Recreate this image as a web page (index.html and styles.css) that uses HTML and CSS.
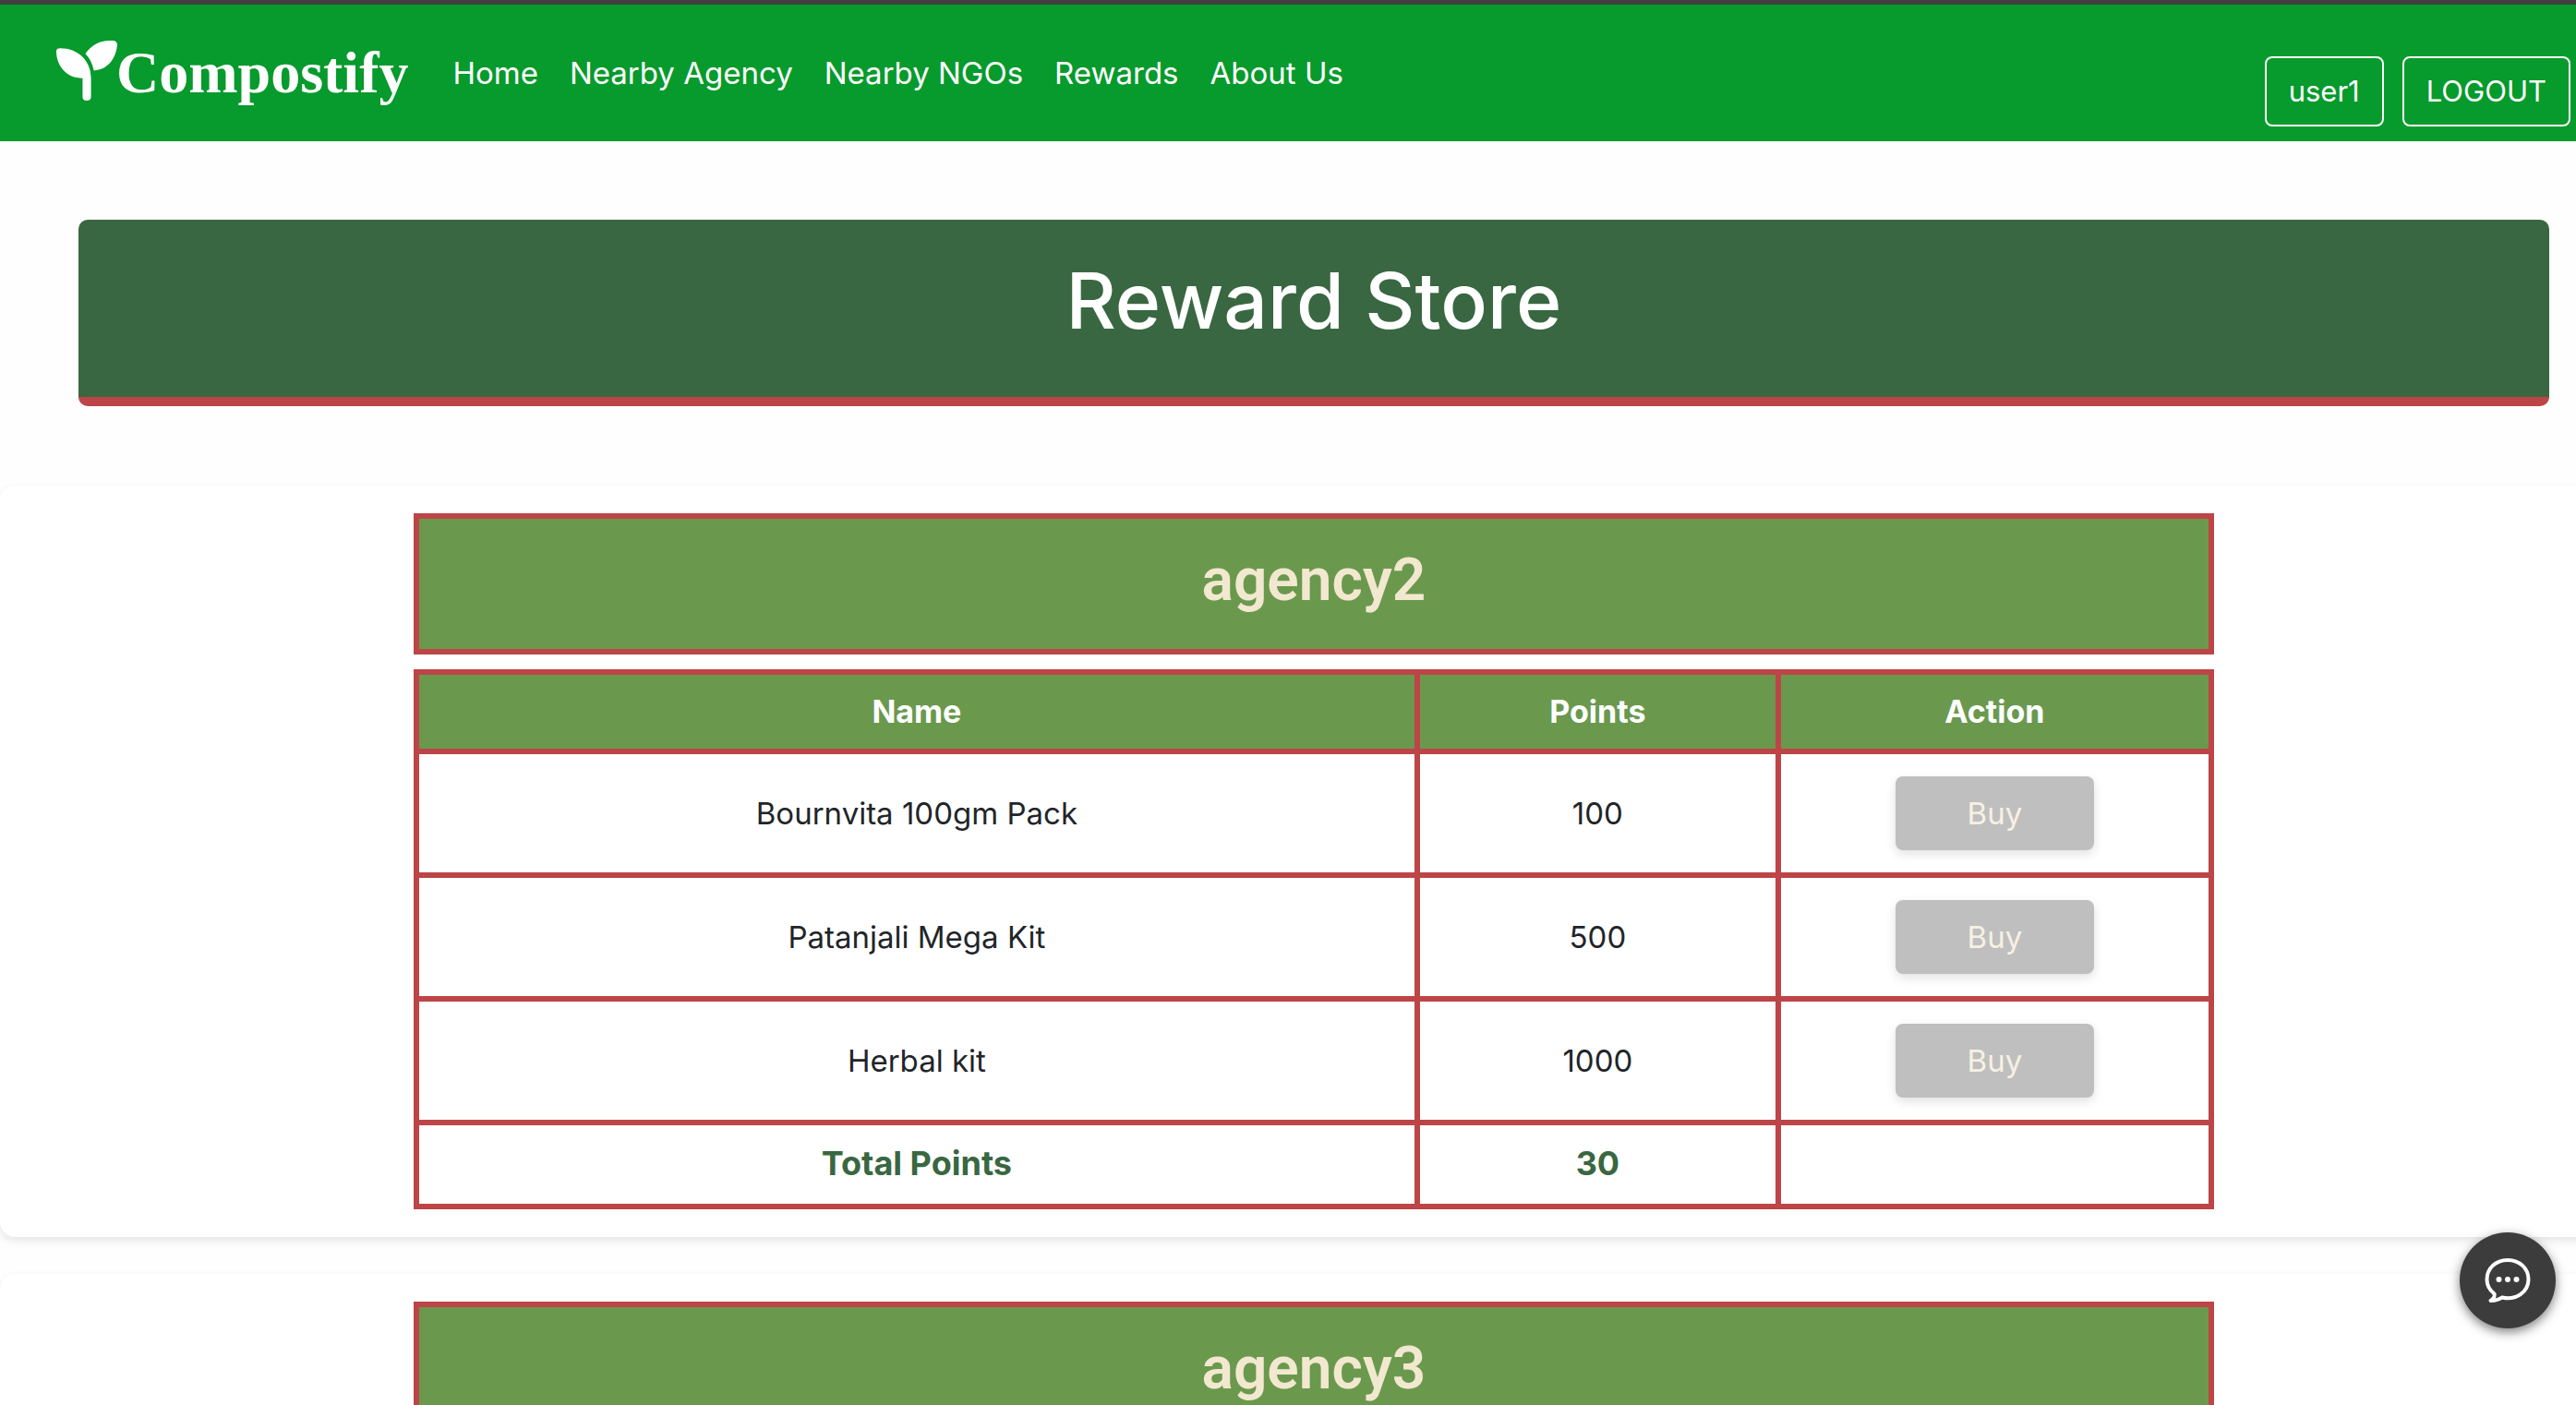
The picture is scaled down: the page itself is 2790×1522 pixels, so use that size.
FILE: index.html
```html
<!DOCTYPE html>
<html lang="en">
<head>
<meta charset="utf-8">
<title>Compostify - Reward Store</title>
<link rel="stylesheet" href="styles.css">
</head>
<body>
<header class="navbar">
  <a class="brand" href="#">
    <svg class="brand-icon" viewBox="0 0 64 64" aria-hidden="true">
      <path d="M0 11Q0 8 4 8C23 8 37 21 37 40V60Q37 64 32.500 64T28 60V40C11 40 0 27 0 11Z"/>
      <path d="M60 0Q65 0 65 5C63 21 54 31 40 32Q38 21 31 14C37 5 46 0 57 0Z"/>
    </svg>
    <span class="brand-name">Compostify</span>
  </a>
  <nav class="nav-links">
    <a href="#">Home</a>
    <a href="#">Nearby Agency</a>
    <a href="#">Nearby NGOs</a>
    <a href="#">Rewards</a>
    <a href="#">About Us</a>
  </nav>
  <div class="account">
    <button class="btn-outline" type="button">user1</button>
    <button class="btn-outline" type="button">LOGOUT</button>
  </div>
</header>

<main class="store">
  <div class="banner"><h1>Reward Store</h1></div>

  <section class="card">
    <h2 class="agency">agency2</h2>
    <table class="rewards">
      <thead>
        <tr><th class="col-name">Name</th><th class="col-points">Points</th><th class="col-action">Action</th></tr>
      </thead>
      <tbody>
        <tr><td>Bournvita 100gm Pack</td><td>100</td><td><button class="buy" type="button">Buy</button></td></tr>
        <tr><td>Patanjali Mega Kit</td><td>500</td><td><button class="buy" type="button">Buy</button></td></tr>
        <tr><td>Herbal kit</td><td>1000</td><td><button class="buy" type="button">Buy</button></td></tr>
      </tbody>
      <tfoot>
        <tr><td>Total Points</td><td>30</td><td></td></tr>
      </tfoot>
    </table>
  </section>

  <section class="card">
    <h2 class="agency">agency3</h2>
  </section>
</main>

<button class="chat" type="button" aria-label="Open chat">
  <svg viewBox="0 0 50 50" aria-hidden="true">
    <path d="M25 3C11.500 3 2.500 12.500 2.500 24C2.500 31 6 36 10.500 39.500C11.500 42.500 9.500 45 6.500 47C11.500 47.500 15.500 45.500 19 43.500C34 47 47.500 37.500 47.500 24C47.500 12.500 38.500 3 25 3Z"/>
    <circle cx="15.500" cy="24" r="3"/><circle cx="25" cy="24" r="3"/><circle cx="34.500" cy="24" r="3"/>
  </svg>
</button>
</body>
</html>
```
FILE: styles.css
```css
* { box-sizing: border-box; }

html,
body { height: 100%; }

body {
  margin: 0;
  overflow: hidden;
  background: #fefefe;
  color: #212529;
  font: 33px/48px Inter, sans-serif;
}

button { font: inherit; }

/* Top bar */
.navbar {
  display: flex;
  align-items: flex-start;
  height: 153px;
  padding: 35px 6px 0 61px;
  border-top: 5px solid #404040;
  background: #079a2c;
  color: #fff;
}

.navbar a { color: inherit; text-decoration: none; }
.brand { display: flex; }
.brand-icon { width: 65px; height: 65px; margin-top: 4px; fill: #fff; overflow: visible; }
.brand-name { padding-top: 2px; font: bold 64px/74px "Liberation Serif", serif; }
.nav-links { display: flex; gap: 34px; margin: 15px 0 0 48px; }
.account { display: flex; gap: 20px; margin: 21px 0 0 auto; }

.btn-outline {
  height: 76px;
  padding: 0 24px;
  border: 2px solid #fff;
  border-radius: 8px;
  background: transparent;
  color: #fff;
  font-size: 31px;
}

/* The store overflows the window slightly on the right */
.store { width: 102%; }

.banner {
  margin: 85px 85px 86px;
  height: 202px;
  padding-top: 40px;
  border-bottom: 10px solid #bd4547;
  border-radius: 10px;
  background: #396741;
  color: #fff;
  text-align: center;
}

.banner h1 { margin: 0; font-size: 84px; font-weight: 500; line-height: 96px; }

.card {
  margin-bottom: 40px;
  padding: 30px 0;
  border-radius: 16px;
  background: #fff;
  box-shadow: 0 4px 10px rgba(0, 0, 0, 0.1);
}

.agency,
.rewards { width: 100%; max-width: 1950px; margin: 0 auto; }

.agency {
  height: 153px;
  margin-bottom: 16px;
  padding-top: 28px;
  border: 6px solid #bd4547;
  background: #6a994e;
  color: #f2e8cf;
  font: 600 64px/77px Roboto, sans-serif;
  text-align: center;
}

.rewards {
  border-collapse: collapse;
  table-layout: fixed;
  text-align: center;
}

.rewards th,
.rewards td { padding: 0 24px; border: 6px solid #bd4547; }
.rewards th { height: 86px; background: #6a994e; color: #fff; font-size: 34px; font-weight: 700; }
.rewards td { height: 134px; background: #fff; }
.rewards tfoot td { height: 91px; padding-bottom: 4px; color: #396741; font-size: 36px; font-weight: 700; }
.col-points { width: 391px; }
.col-action { width: 469px; }

.buy {
  width: 215px;
  height: 80px;
  border: 0;
  border-radius: 8px;
  background: #bfbfbf;
  color: #f7f1e3;
  box-shadow: 0 4px 12px rgba(0, 0, 0, 0.12);
  vertical-align: middle;
}

/* Floating chat launcher */
.chat {
  position: fixed;
  right: 22px;
  bottom: 83px;
  display: grid;
  place-items: center;
  width: 104px;
  height: 104px;
  padding: 0;
  border: 0;
  border-radius: 50%;
  background: #3c3c3c;
  box-shadow: 0 4px 12px rgba(0, 0, 0, 0.5);
}

.chat svg { width: 50px; height: 50px; fill: #fff; }
.chat path { fill: none; stroke: #fff; stroke-width: 4; stroke-linejoin: round; }
```
